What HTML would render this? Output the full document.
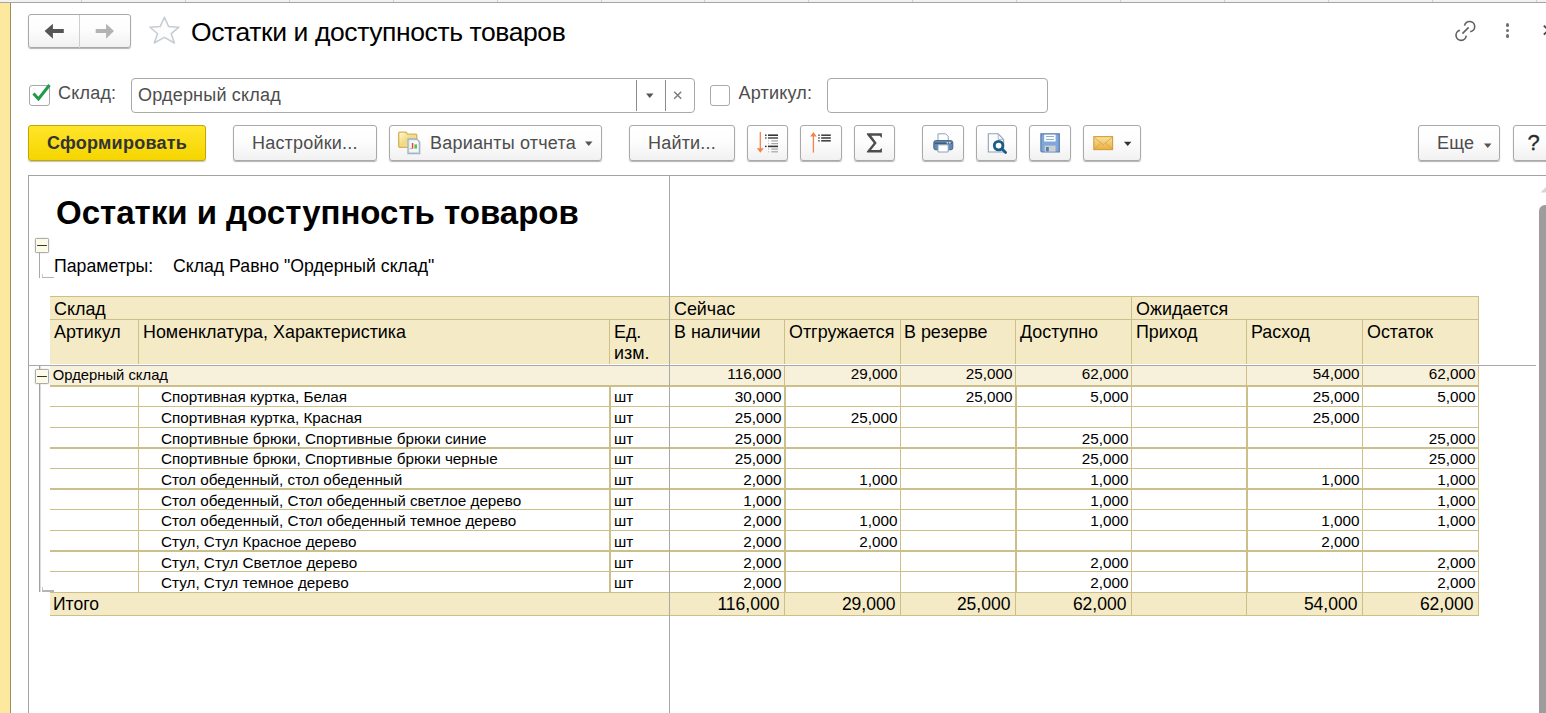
<!DOCTYPE html>
<html><head><meta charset="utf-8"><style>
html,body{margin:0;padding:0;overflow:hidden;}
body{width:1546px;height:713px;overflow:hidden;position:relative;background:#fff;font-family:"Liberation Sans", sans-serif;}
.abs{position:absolute;}
.btn{position:absolute;box-sizing:border-box;border:1px solid #a9a9a9;border-radius:3px;background:linear-gradient(#ffffff 0%,#fdfdfd 45%,#f1f1f1 100%);box-shadow:0 1px 1px rgba(0,0,0,0.3);}
.bt{position:absolute;white-space:pre;color:#4d4d4d;font-size:18px;line-height:20px;letter-spacing:0.2px;}
.t{position:absolute;white-space:pre;color:#000;}
.ln{position:absolute;background:#cdbf88;}
.inp{position:absolute;box-sizing:border-box;border:1px solid #a9a9a9;border-radius:4px;background:#fff;}
</style></head><body>

<div class="abs" style="left:0;top:0;width:1546px;height:2px;background:#f2f2f2"></div>
<div class="abs" style="left:0;top:2px;width:1546px;height:1px;background:#a6a6a6"></div>
<div class="abs" style="left:81px;top:0;width:1px;height:2px;background:#d0d0d0"></div>
<div class="abs" style="left:185px;top:0;width:1px;height:2px;background:#d0d0d0"></div>
<div class="abs" style="left:289px;top:0;width:1px;height:2px;background:#d0d0d0"></div>
<div class="abs" style="left:393px;top:0;width:1px;height:2px;background:#d0d0d0"></div>
<div class="abs" style="left:497px;top:0;width:1px;height:2px;background:#d0d0d0"></div>
<div class="abs" style="left:601px;top:0;width:1px;height:2px;background:#d0d0d0"></div>
<div class="abs" style="left:704px;top:0;width:1px;height:2px;background:#d0d0d0"></div>
<div class="abs" style="left:808px;top:0;width:1px;height:2px;background:#d0d0d0"></div>
<div class="abs" style="left:912px;top:0;width:1px;height:2px;background:#d0d0d0"></div>
<div class="abs" style="left:1016px;top:0;width:1px;height:2px;background:#d0d0d0"></div>
<div class="abs" style="left:1120px;top:0;width:1px;height:2px;background:#d0d0d0"></div>
<div class="abs" style="left:1224px;top:0;width:1px;height:2px;background:#d0d0d0"></div>
<div class="abs" style="left:1328px;top:0;width:1px;height:2px;background:#d0d0d0"></div>
<div class="abs" style="left:1432px;top:0;width:1px;height:2px;background:#d0d0d0"></div>
<div class="abs" style="left:1536px;top:0;width:1px;height:2px;background:#d0d0d0"></div>
<div class="abs" style="left:0;top:3px;width:10px;height:710px;background:#fce99e"></div>
<div class="abs" style="left:10px;top:3px;width:1px;height:710px;background:#9c8f5e"></div>
<div class="btn" style="left:28px;top:14px;width:103px;height:34px;"></div>
<div class="abs" style="left:79px;top:15px;width:1px;height:33px;background:#cfcfcf"></div>
<svg class="abs" style="left:40px;top:20px" width="30" height="24" viewBox="0 0 30 24"><path d="M4.6 11 L12.9 3.8 L12.9 9 L23.8 9 L23.8 13 L12.9 13 L12.9 18.8 Z" fill="#555"/></svg>
<svg class="abs" style="left:90px;top:20px" width="30" height="24" viewBox="0 0 30 24"><path d="M24 11 L16.1 3.8 L16.1 9 L5.7 9 L5.7 13 L16.1 13 L16.1 18.8 Z" fill="#b3b3b3"/></svg>
<svg class="abs" style="left:147px;top:15px" width="34" height="31" viewBox="0 0 34 31"><path d="M17.4 2.3 L21.7 11.6 L32.0 12.2 L24.2 18.7 L27.4 28.0 L17.4 22.3 L7.2 28.0 L10.6 18.7 L3.0 12.2 L13.1 11.6 Z" fill="#fdfdfe" stroke="#c6ccd2" stroke-width="1.5" stroke-linejoin="round" stroke-linejoin="miter"/></svg>
<div class="t" style="left:191px;top:16.5px;font-size:26.5px;letter-spacing:-0.4px;line-height:30px;color:#000">Остатки и доступность товаров</div>
<svg class="abs" style="left:1453px;top:18px" width="25" height="25" viewBox="0 0 25 25"><g fill="none" stroke="#606060" stroke-width="1.6" stroke-linecap="butt"><path d="M11.6 7.6 A5.1 5.1 0 1 1 17.2 13.6"/><path d="M6.9 12.3 A5.1 5.1 0 1 0 13.2 17.6"/><path d="M9.4 15.6 L15.6 9.4"/></g></svg>
<div class="abs" style="left:1505.7px;top:23px;width:3.8px;height:3.8px;border-radius:2px;background:#707070"></div>
<div class="abs" style="left:1505.7px;top:28.7px;width:3.8px;height:3.8px;border-radius:2px;background:#707070"></div>
<div class="abs" style="left:1505.7px;top:34.3px;width:3.8px;height:3.8px;border-radius:2px;background:#707070"></div>
<svg class="abs" style="left:1540.8px;top:23px" width="10" height="14" viewBox="0 0 10 14"><path d="M2.8 2.6 L7.5 7.2 M2.8 11.6 L7.5 7" stroke="#444" stroke-width="1.7"/></svg>
<div class="abs" style="left:29px;top:85px;width:21px;height:21px;box-sizing:border-box;border:1px solid #a9a9a9;border-radius:3px;background:#fff"></div>
<svg class="abs" style="left:30px;top:82px" width="22" height="22" viewBox="0 0 22 22"><path d="M3.5 11.5 L8.5 17 L19.5 3" fill="none" stroke="#1f9b4a" stroke-width="3"/></svg>
<div class="bt" style="left:58px;top:83px">Склад:</div>
<div class="inp" style="left:131px;top:78px;width:564px;height:35px;"></div>
<div class="bt" style="left:138px;top:85px">Ордерный склад</div>
<div class="abs" style="left:636px;top:80px;width:1px;height:31px;background:#8c8c8c"></div>
<div class="abs" style="left:665px;top:80px;width:1px;height:31px;background:#8c8c8c"></div>
<svg class="abs" style="left:645px;top:92.7px" width="10" height="6" viewBox="0 0 10 6"><path d="M1 0.5 L8.5 0.5 L4.75 5 Z" fill="#555"/></svg>
<svg class="abs" style="left:673px;top:91px" width="10" height="10" viewBox="0 0 10 10"><path d="M1.2 0.8 L8.2 7.8 M8.2 0.8 L1.2 7.8" stroke="#7a7a7a" stroke-width="1.4"/></svg>
<div class="abs" style="left:710px;top:85px;width:20px;height:21px;box-sizing:border-box;border:1px solid #a9a9a9;border-radius:3px;background:#fff"></div>
<div class="bt" style="left:738.5px;top:83px">Артикул:</div>
<div class="inp" style="left:827px;top:78px;width:221px;height:35px;"></div>
<div class="abs" style="left:28px;top:125px;width:178px;height:36px;box-sizing:border-box;border:1px solid #c2a800;border-radius:3px;background:linear-gradient(#ffe52a,#f5d500);box-shadow:0 1px 1px rgba(0,0,0,0.25)"></div>
<div class="bt" style="left:47px;top:133px;font-weight:bold;color:#333;letter-spacing:0.25px">Сформировать</div>
<div class="btn" style="left:233px;top:125px;width:144px;height:36px;"></div>
<div class="bt" style="left:252px;top:133px">Настройки...</div>
<div class="btn" style="left:389px;top:125px;width:213px;height:36px;"></div>
<svg class="abs" style="left:397px;top:131px" width="24" height="24" viewBox="0 0 24 24">
<defs><linearGradient id="fg" x1="0" y1="0" x2="1" y2="1"><stop offset="0" stop-color="#fff8d2"/><stop offset="0.5" stop-color="#f3da82"/><stop offset="1" stop-color="#f7e3a0"/></linearGradient></defs>
<path d="M1.7 2.2 Q1.7 1.2 2.7 1.2 L8.8 1.2 L10.6 3.2 L18.8 3.2 Q19.8 3.2 19.8 4.2 L19.8 16.3 L2.7 16.3 Q1.7 16.3 1.7 15.3 Z" fill="url(#fg)" stroke="#d8b158" stroke-width="1.3"/>
<path d="M11 8 L19.6 8 L22.7 11.1 L22.7 22.5 L11 22.5 Z" fill="#dde7f0" stroke="#9db3c6" stroke-width="1.3"/>
<rect x="12.6" y="9.6" width="8.4" height="11.2" fill="#f4f8fb"/>
<rect x="14.8" y="12" width="1.5" height="5.6" fill="#e8473b"/><rect x="17.4" y="13.4" width="2.6" height="4.2" fill="#62bb50"/>
<rect x="12.8" y="17.4" width="3" height="0.7" fill="#e8786b"/>
</svg>
<div class="bt" style="left:430px;top:133px">Варианты отчета</div>
<svg class="abs" style="left:584px;top:141px" width="10" height="6" viewBox="0 0 10 6"><path d="M1 0.5 L8.5 0.5 L4.75 5 Z" fill="#555"/></svg>
<div class="btn" style="left:629px;top:125px;width:106px;height:36px;"></div>
<div class="bt" style="left:648px;top:133px">Найти...</div>
<div class="btn" style="left:747px;top:125px;width:41px;height:36px;"></div>
<div class="btn" style="left:800px;top:125px;width:42px;height:36px;"></div>
<div class="btn" style="left:854px;top:125px;width:41px;height:36px;"></div>
<div class="btn" style="left:922px;top:125px;width:42px;height:36px;"></div>
<div class="btn" style="left:976px;top:125px;width:41px;height:36px;"></div>
<div class="btn" style="left:1029px;top:125px;width:42px;height:36px;"></div>
<div class="btn" style="left:1083px;top:125px;width:58px;height:36px;"></div>
<svg class="abs" style="left:747px;top:125px" width="41" height="36" viewBox="0 0 41 36">
<path d="M13.3 7 L13.3 24" stroke="#f5834a" stroke-width="1.3"/><path d="M9.9 23.3 L16.7 23.3 L13.3 27.7 Z" fill="#f5834a"/>
<g fill="#333"><rect x="18" y="9.5" width="1.6" height="1.4"/><rect x="21" y="9.4" width="10" height="1.6"/>
<rect x="18" y="12.3" width="1.6" height="1.4" fill="#555"/><rect x="21" y="12.2" width="10" height="1.6" fill="#555"/>
<rect x="18" y="20.7" width="1.6" height="1.4"/><rect x="21" y="20.6" width="10" height="1.6"/></g>
<g fill="#a6a6a6"><rect x="21.2" y="15.4" width="0.9" height="1"/><rect x="24.3" y="15.3" width="6.7" height="1.2"/>
<rect x="21.2" y="18.1" width="0.9" height="1"/><rect x="24.3" y="18" width="6.7" height="1.2"/>
<rect x="21.2" y="23.6" width="0.9" height="1"/><rect x="24.3" y="23.5" width="6.7" height="1.2"/>
<rect x="21.2" y="26.3" width="0.9" height="1"/><rect x="24.3" y="26.2" width="6.7" height="1.2"/></g>
</svg>
<svg class="abs" style="left:800px;top:125px" width="42" height="36" viewBox="0 0 42 36">
<path d="M13.4 10 L13.4 27.6" stroke="#f5834a" stroke-width="1.3"/><path d="M10.1 11.4 L16.7 11.4 L13.4 7 Z" fill="#f5834a"/>
<g fill="#444"><rect x="18.2" y="9.5" width="1.5" height="1.4"/><rect x="21.2" y="9.4" width="9.6" height="1.6"/>
<rect x="18.2" y="12.3" width="1.5" height="1.4"/><rect x="21.2" y="12.2" width="9.6" height="1.6"/>
<rect x="18.2" y="15.1" width="1.5" height="1.4"/><rect x="21.2" y="15" width="9.6" height="1.6"/></g>
</svg>
<svg class="abs" style="left:854px;top:125px" width="41" height="36" viewBox="0 0 41 36"><path d="M12.9 8.2 L27.9 8.2 L27.9 12.9 L25.6 10.7 L17.3 10.7 L22.7 17.9 L17.1 25.1 L25.6 25.1 L27.9 22.9 L27.9 27.6 L12.9 27.6 L12.9 26.4 L19.7 17.9 L12.9 9.6 Z" fill="#4d4d4d"/></svg>
<svg class="abs" style="left:922px;top:125px" width="42" height="36" viewBox="0 0 42 36">
<path d="M16 8.8 L23.6 8.8 L26.2 11.4 L26.2 16 L16 16 Z" fill="#fff" stroke="#8da2b7" stroke-width="1"/>
<rect x="11.8" y="15.6" width="19" height="9.2" rx="2" fill="#6088b2" stroke="#46678b" stroke-width="1"/>
<rect x="12.5" y="17.6" width="17.6" height="1.4" fill="#3f5c7c"/>
<rect x="24.6" y="17.3" width="1.6" height="1.2" fill="#fff"/><rect x="27" y="17.3" width="1.6" height="1.2" fill="#fff"/>
<path d="M16 19.8 L26.2 19.8 L26.2 27 L16 27 Z" fill="#fff" stroke="#8da2b7" stroke-width="1"/>
</svg>
<svg class="abs" style="left:976px;top:125px" width="41" height="36" viewBox="0 0 41 36">
<path d="M12.3 8.8 L22.2 8.8 L27.6 14.4 L27.6 27 L12.3 27 Z" fill="#fbfbfb" stroke="#8da2b7" stroke-width="1.1"/>
<path d="M22.2 8.8 L22.2 14.4 L27.6 14.4" fill="none" stroke="#a9bacb" stroke-width="1"/>
<circle cx="22.6" cy="20.6" r="4.3" fill="#fff" stroke="#1c5c86" stroke-width="2.8"/>
<path d="M26 24 L29.6 27.6" stroke="#1c5c86" stroke-width="2.8" stroke-linecap="round"/>
</svg>
<svg class="abs" style="left:1029px;top:125px" width="42" height="36" viewBox="0 0 42 36">
<path d="M11.9 8.8 L30.3 8.8 L30.3 27 L12.9 27 L11.9 26 Z" fill="#7fa7d9" stroke="#5a7dac" stroke-width="1.2"/>
<rect x="15.2" y="9.6" width="11.4" height="6.9" fill="#fff"/>
<rect x="17" y="11" width="8" height="1" fill="#8fadd0"/><rect x="17" y="13.9" width="8" height="1" fill="#8fadd0"/>
<rect x="15.6" y="20.6" width="11" height="6" fill="#c9d1d3"/>
<rect x="17" y="22" width="2.8" height="4.4" fill="#5a7dac"/>
</svg>
<svg class="abs" style="left:1083px;top:125px" width="58" height="36" viewBox="0 0 58 36">
<defs><linearGradient id="mg" x1="0" y1="0" x2="0" y2="1"><stop offset="0" stop-color="#f8e3a0"/><stop offset="1" stop-color="#e8b040"/></linearGradient></defs>
<rect x="10.8" y="11.6" width="18.8" height="13" fill="url(#mg)" stroke="#d69d38" stroke-width="1.1"/>
<path d="M11.5 12.5 L20.2 20 L29 12.5 M11.5 24 L17.5 18.5 M29 24 L23 18.5" fill="none" stroke="#d9a445" stroke-width="0.9"/>
</svg>
<svg class="abs" style="left:1123px;top:141px" width="10" height="6" viewBox="0 0 10 6"><path d="M1 0.8 L8.4 0.8 L4.7 5 Z" fill="#333"/></svg>
<div class="btn" style="left:1418px;top:125px;width:82px;height:36px;"></div>
<div class="bt" style="left:1437px;top:133px">Еще</div>
<svg class="abs" style="left:1483px;top:142.5px" width="10" height="6" viewBox="0 0 10 6"><path d="M1 0.5 L8.5 0.5 L4.75 5 Z" fill="#555"/></svg>
<div class="btn" style="left:1513px;top:125px;width:50px;height:36px;"></div>
<div class="bt" style="left:1527.5px;top:131.5px;color:#2a2a2a;font-size:22px;line-height:22px;-webkit-text-stroke:0.3px #2a2a2a">?</div>
<div class="abs" style="left:28px;top:175px;width:1518px;height:1px;background:#a3a3a3"></div>
<div class="abs" style="left:28px;top:175px;width:1px;height:538px;background:#a3a3a3"></div>
<svg class="abs" style="left:1539px;top:186px" width="8" height="7" viewBox="0 0 8 7"><path d="M1.5 6.5 L7 1 L8 1 L8 6.5 Z" fill="#d6d6d6"/></svg>
<div class="abs" style="left:1539px;top:205px;width:14px;height:520px;border-radius:6px;background:#9d9d9d"></div>
<div class="t" style="left:56px;top:194px;font-size:33px;line-height:38px;font-weight:bold">Остатки и доступность товаров</div>
<div class="abs" style="left:35px;top:238px;width:14px;height:15px;box-sizing:border-box;border:1px solid #acacac;border-radius:1.5px;background:#fdfbe8;box-shadow:0 0 1.5px rgba(0,0,0,0.25)"></div>
<div class="abs" style="left:37px;top:244.6px;width:10px;height:1.6px;background:#333;border-radius:1px"></div>
<div class="abs" style="left:39px;top:253px;width:1px;height:25px;background:#a8a8a8"></div>
<div class="abs" style="left:42px;top:277px;width:12px;height:1px;background:#b4b4b4"></div>
<div class="abs" style="left:42px;top:274px;width:1px;height:3px;background:#c8c8c8"></div>
<div class="t" style="left:54px;top:256px;font-size:17.7px;line-height:20px">Параметры:</div>
<div class="t" style="left:173px;top:256px;font-size:17.7px;line-height:20px">Склад Равно "Ордерный склад"</div>
<div class="abs" style="left:50px;top:296px;width:619px;height:68px;background:#f4ebc6"></div>
<div class="abs" style="left:670px;top:296px;width:809px;height:68px;background:#f4ebc6"></div>
<div class="ln" style="left:50px;top:296px;width:1429px;height:1px"></div>
<div class="ln" style="left:50px;top:319px;width:1429px;height:1px"></div>
<div class="ln" style="left:1478px;top:296px;width:1px;height:68px"></div>
<div class="ln" style="left:1131px;top:296px;width:1px;height:68px"></div>
<div class="ln" style="left:138px;top:319px;width:1px;height:45px"></div>
<div class="ln" style="left:609px;top:319px;width:1px;height:45px"></div>
<div class="ln" style="left:784px;top:319px;width:1px;height:45px"></div>
<div class="ln" style="left:900px;top:319px;width:1px;height:45px"></div>
<div class="ln" style="left:1015px;top:319px;width:1px;height:45px"></div>
<div class="ln" style="left:1246px;top:319px;width:1px;height:45px"></div>
<div class="ln" style="left:1362px;top:319px;width:1px;height:45px"></div>
<div class="t" style="left:54px;top:299px;font-size:17.9px;line-height:21.5px">Склад</div>
<div class="t" style="left:674px;top:299px;font-size:17.9px;line-height:21.5px">Сейчас</div>
<div class="t" style="left:1136px;top:299px;font-size:17.9px;line-height:21.5px">Ожидается</div>
<div class="t" style="left:54px;top:321.8px;font-size:17.9px;line-height:20.7px">Артикул</div>
<div class="t" style="left:143px;top:321.8px;font-size:17.9px;line-height:20.7px">Номенклатура, Характеристика</div>
<div class="t" style="left:614px;top:321.8px;font-size:17.9px;line-height:20.7px">Ед.
изм.</div>
<div class="t" style="left:674px;top:321.8px;font-size:17.9px;line-height:20.7px">В наличии</div>
<div class="t" style="left:789px;top:321.8px;font-size:17.9px;line-height:20.7px">Отгружается</div>
<div class="t" style="left:904px;top:321.8px;font-size:17.9px;line-height:20.7px">В резерве</div>
<div class="t" style="left:1020px;top:321.8px;font-size:17.9px;line-height:20.7px">Доступно</div>
<div class="t" style="left:1136px;top:321.8px;font-size:17.9px;line-height:20.7px">Приход</div>
<div class="t" style="left:1251px;top:321.8px;font-size:17.9px;line-height:20.7px">Расход</div>
<div class="t" style="left:1367px;top:321.8px;font-size:17.9px;line-height:20.7px">Остаток</div>
<div class="abs" style="left:50px;top:366px;width:619px;height:19px;background:#f7f0da"></div>
<div class="abs" style="left:670px;top:366px;width:809px;height:19px;background:#f7f0da"></div>
<div class="ln" style="left:50px;top:385px;width:1429px;height:2px"></div>
<div class="ln" style="left:50px;top:406px;width:1429px;height:1px"></div>
<div class="ln" style="left:50px;top:427px;width:1429px;height:1px"></div>
<div class="ln" style="left:50px;top:447px;width:1429px;height:2px"></div>
<div class="ln" style="left:50px;top:468px;width:1429px;height:1px"></div>
<div class="ln" style="left:50px;top:488px;width:1429px;height:2px"></div>
<div class="ln" style="left:50px;top:509px;width:1429px;height:1px"></div>
<div class="ln" style="left:50px;top:530px;width:1429px;height:1px"></div>
<div class="ln" style="left:50px;top:550px;width:1429px;height:2px"></div>
<div class="ln" style="left:50px;top:571px;width:1429px;height:1px"></div>
<div class="ln" style="left:784px;top:366px;width:1px;height:19px"></div>
<div class="ln" style="left:900px;top:366px;width:1px;height:19px"></div>
<div class="ln" style="left:1015px;top:366px;width:1px;height:19px"></div>
<div class="ln" style="left:1131px;top:366px;width:1px;height:19px"></div>
<div class="ln" style="left:1246px;top:366px;width:1px;height:19px"></div>
<div class="ln" style="left:1362px;top:366px;width:1px;height:19px"></div>
<div class="ln" style="left:1478px;top:366px;width:1px;height:19px"></div>
<div class="ln" style="left:138px;top:387px;width:1px;height:205px"></div>
<div class="ln" style="left:609px;top:387px;width:2px;height:205px"></div>
<div class="ln" style="left:784px;top:387px;width:2px;height:205px"></div>
<div class="ln" style="left:900px;top:387px;width:1px;height:205px"></div>
<div class="ln" style="left:1015px;top:387px;width:2px;height:205px"></div>
<div class="ln" style="left:1131px;top:387px;width:1px;height:205px"></div>
<div class="ln" style="left:1246px;top:387px;width:2px;height:205px"></div>
<div class="ln" style="left:1362px;top:387px;width:1px;height:205px"></div>
<div class="ln" style="left:1478px;top:387px;width:1px;height:205px"></div>
<div class="t" style="left:52.8px;top:365.5px;font-size:14.8px;line-height:18px">Ордерный склад</div>
<div class="t" style="right:764.6px;top:365px;font-size:15.28px;line-height:18px">116,000</div>
<div class="t" style="right:648.6px;top:365px;font-size:15.28px;line-height:18px">29,000</div>
<div class="t" style="right:533.6px;top:365px;font-size:15.28px;line-height:18px">25,000</div>
<div class="t" style="right:417.6px;top:365px;font-size:15.28px;line-height:18px">62,000</div>
<div class="t" style="right:186.6px;top:365px;font-size:15.28px;line-height:18px">54,000</div>
<div class="t" style="right:70.6px;top:365px;font-size:15.28px;line-height:18px">62,000</div>
<div class="t" style="left:161px;top:388.3px;font-size:15.28px;line-height:18px">Спортивная куртка, Белая</div>
<div class="t" style="left:614px;top:388.3px;font-size:15.28px;line-height:18px">шт</div>
<div class="t" style="right:764.6px;top:388.3px;font-size:15.28px;line-height:18px">30,000</div>
<div class="t" style="right:533.6px;top:388.3px;font-size:15.28px;line-height:18px">25,000</div>
<div class="t" style="right:417.6px;top:388.3px;font-size:15.28px;line-height:18px">5,000</div>
<div class="t" style="right:186.6px;top:388.3px;font-size:15.28px;line-height:18px">25,000</div>
<div class="t" style="right:70.6px;top:388.3px;font-size:15.28px;line-height:18px">5,000</div>
<div class="t" style="left:161px;top:409.0px;font-size:15.28px;line-height:18px">Спортивная куртка, Красная</div>
<div class="t" style="left:614px;top:409.0px;font-size:15.28px;line-height:18px">шт</div>
<div class="t" style="right:764.6px;top:409.0px;font-size:15.28px;line-height:18px">25,000</div>
<div class="t" style="right:648.6px;top:409.0px;font-size:15.28px;line-height:18px">25,000</div>
<div class="t" style="right:186.6px;top:409.0px;font-size:15.28px;line-height:18px">25,000</div>
<div class="t" style="left:161px;top:429.6px;font-size:15.28px;line-height:18px">Спортивные брюки, Спортивные брюки синие</div>
<div class="t" style="left:614px;top:429.6px;font-size:15.28px;line-height:18px">шт</div>
<div class="t" style="right:764.6px;top:429.6px;font-size:15.28px;line-height:18px">25,000</div>
<div class="t" style="right:417.6px;top:429.6px;font-size:15.28px;line-height:18px">25,000</div>
<div class="t" style="right:70.6px;top:429.6px;font-size:15.28px;line-height:18px">25,000</div>
<div class="t" style="left:161px;top:450.3px;font-size:15.28px;line-height:18px">Спортивные брюки, Спортивные брюки черные</div>
<div class="t" style="left:614px;top:450.3px;font-size:15.28px;line-height:18px">шт</div>
<div class="t" style="right:764.6px;top:450.3px;font-size:15.28px;line-height:18px">25,000</div>
<div class="t" style="right:417.6px;top:450.3px;font-size:15.28px;line-height:18px">25,000</div>
<div class="t" style="right:70.6px;top:450.3px;font-size:15.28px;line-height:18px">25,000</div>
<div class="t" style="left:161px;top:471.0px;font-size:15.28px;line-height:18px">Стол обеденный, стол обеденный</div>
<div class="t" style="left:614px;top:471.0px;font-size:15.28px;line-height:18px">шт</div>
<div class="t" style="right:764.6px;top:471.0px;font-size:15.28px;line-height:18px">2,000</div>
<div class="t" style="right:648.6px;top:471.0px;font-size:15.28px;line-height:18px">1,000</div>
<div class="t" style="right:417.6px;top:471.0px;font-size:15.28px;line-height:18px">1,000</div>
<div class="t" style="right:186.6px;top:471.0px;font-size:15.28px;line-height:18px">1,000</div>
<div class="t" style="right:70.6px;top:471.0px;font-size:15.28px;line-height:18px">1,000</div>
<div class="t" style="left:161px;top:491.7px;font-size:15.28px;line-height:18px">Стол обеденный, Стол обеденный светлое дерево</div>
<div class="t" style="left:614px;top:491.7px;font-size:15.28px;line-height:18px">шт</div>
<div class="t" style="right:764.6px;top:491.7px;font-size:15.28px;line-height:18px">1,000</div>
<div class="t" style="right:417.6px;top:491.7px;font-size:15.28px;line-height:18px">1,000</div>
<div class="t" style="right:70.6px;top:491.7px;font-size:15.28px;line-height:18px">1,000</div>
<div class="t" style="left:161px;top:512.3px;font-size:15.28px;line-height:18px">Стол обеденный, Стол обеденный темное дерево</div>
<div class="t" style="left:614px;top:512.3px;font-size:15.28px;line-height:18px">шт</div>
<div class="t" style="right:764.6px;top:512.3px;font-size:15.28px;line-height:18px">2,000</div>
<div class="t" style="right:648.6px;top:512.3px;font-size:15.28px;line-height:18px">1,000</div>
<div class="t" style="right:417.6px;top:512.3px;font-size:15.28px;line-height:18px">1,000</div>
<div class="t" style="right:186.6px;top:512.3px;font-size:15.28px;line-height:18px">1,000</div>
<div class="t" style="right:70.6px;top:512.3px;font-size:15.28px;line-height:18px">1,000</div>
<div class="t" style="left:161px;top:533.0px;font-size:15.28px;line-height:18px">Стул, Стул Красное дерево</div>
<div class="t" style="left:614px;top:533.0px;font-size:15.28px;line-height:18px">шт</div>
<div class="t" style="right:764.6px;top:533.0px;font-size:15.28px;line-height:18px">2,000</div>
<div class="t" style="right:648.6px;top:533.0px;font-size:15.28px;line-height:18px">2,000</div>
<div class="t" style="right:186.6px;top:533.0px;font-size:15.28px;line-height:18px">2,000</div>
<div class="t" style="left:161px;top:553.7px;font-size:15.28px;line-height:18px">Стул, Стул Светлое дерево</div>
<div class="t" style="left:614px;top:553.7px;font-size:15.28px;line-height:18px">шт</div>
<div class="t" style="right:764.6px;top:553.7px;font-size:15.28px;line-height:18px">2,000</div>
<div class="t" style="right:417.6px;top:553.7px;font-size:15.28px;line-height:18px">2,000</div>
<div class="t" style="right:70.6px;top:553.7px;font-size:15.28px;line-height:18px">2,000</div>
<div class="t" style="left:161px;top:574.3px;font-size:15.28px;line-height:18px">Стул, Стул темное дерево</div>
<div class="t" style="left:614px;top:574.3px;font-size:15.28px;line-height:18px">шт</div>
<div class="t" style="right:764.6px;top:574.3px;font-size:15.28px;line-height:18px">2,000</div>
<div class="t" style="right:417.6px;top:574.3px;font-size:15.28px;line-height:18px">2,000</div>
<div class="t" style="right:70.6px;top:574.3px;font-size:15.28px;line-height:18px">2,000</div>
<div class="abs" style="left:50px;top:592px;width:619px;height:23px;background:#f4ebc6"></div>
<div class="abs" style="left:670px;top:592px;width:809px;height:23px;background:#f4ebc6"></div>
<div class="ln" style="left:50px;top:592px;width:1429px;height:1px"></div>
<div class="ln" style="left:50px;top:615px;width:1429px;height:1px"></div>
<div class="ln" style="left:784px;top:592px;width:1px;height:23px"></div>
<div class="ln" style="left:900px;top:592px;width:1px;height:23px"></div>
<div class="ln" style="left:1015px;top:592px;width:1px;height:23px"></div>
<div class="ln" style="left:1131px;top:592px;width:1px;height:23px"></div>
<div class="ln" style="left:1246px;top:592px;width:1px;height:23px"></div>
<div class="ln" style="left:1362px;top:592px;width:1px;height:23px"></div>
<div class="ln" style="left:1478px;top:592px;width:1px;height:23px"></div>
<div class="t" style="left:53px;top:594px;font-size:17.5px;line-height:20px">Итого</div>
<div class="t" style="right:766.6px;top:594px;font-size:17.5px;line-height:20px">116,000</div>
<div class="t" style="right:650.6px;top:594px;font-size:17.5px;line-height:20px">29,000</div>
<div class="t" style="right:535.6px;top:594px;font-size:17.5px;line-height:20px">25,000</div>
<div class="t" style="right:419.6px;top:594px;font-size:17.5px;line-height:20px">62,000</div>
<div class="t" style="right:188.6px;top:594px;font-size:17.5px;line-height:20px">54,000</div>
<div class="t" style="right:72.6px;top:594px;font-size:17.5px;line-height:20px">62,000</div>
<div class="abs" style="left:35px;top:369px;width:14px;height:15px;box-sizing:border-box;border:1px solid #acacac;border-radius:1.5px;background:#fdfbe8;box-shadow:0 0 1.5px rgba(0,0,0,0.25)"></div>
<div class="abs" style="left:37px;top:375.6px;width:10px;height:1.6px;background:#333;border-radius:1px"></div>
<div class="abs" style="left:39px;top:366px;width:1px;height:3px;background:#a0a0a0"></div>
<div class="abs" style="left:40px;top:366px;width:1px;height:3px;background:#dcdcdc"></div>
<div class="abs" style="left:39px;top:384px;width:1px;height:208px;background:#a0a0a0"></div>
<div class="abs" style="left:40px;top:384px;width:1px;height:208px;background:#dcdcdc"></div>
<div class="abs" style="left:42px;top:590px;width:12px;height:1.5px;background:#b4b4b4"></div>
<div class="abs" style="left:42px;top:587px;width:1px;height:3px;background:#c8c8c8"></div>
<div class="abs" style="left:28px;top:365px;width:1508px;height:1px;background:#a9a9a9"></div>
<div class="abs" style="left:669px;top:176px;width:1px;height:537px;background:#a9a9a9"></div>
</body></html>
